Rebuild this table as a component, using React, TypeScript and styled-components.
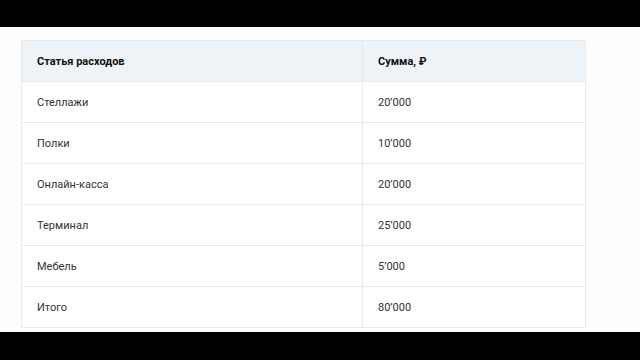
import styled, { createGlobalStyle } from 'styled-components';

interface ExpenseRow {
  item: string;
  amount: string;
}

const GlobalStyle = createGlobalStyle`
  html, body {
    margin: 0;
    padding: 0;
    background: #000;
  }
  body {
    font-family: Roboto, "Liberation Sans", sans-serif;
  }
`;

const Frame = styled.div`
  width: 640px;
  height: 360px;
  display: flex;
  flex-direction: column;
  background: #000;
`;

const Screen = styled.div`
  margin-top: 27px;
  height: 305px;
  background: #fdfdfd;
  padding: 13px 0 0 21px;
  box-sizing: border-box;
`;

const Table = styled.table`
  width: 565px;
  border-collapse: collapse;
  table-layout: fixed;
  font-size: 11px;
  color: #333;
`;

const HeadCell = styled.th`
  height: 41px;
  padding: 0 15px;
  text-align: left;
  font-weight: 700;
  color: #111;
  background: #eef3f7;
  border: 1px solid #e3e9ee;
  box-sizing: border-box;
`;

const Cell = styled.td`
  height: 41px;
  padding: 0 15px;
  text-align: left;
  font-weight: 400;
  background: #fff;
  border: 1px solid #e6ebef;
  box-sizing: border-box;
`;

const expenses: ExpenseRow[] = [
  { item: 'Стеллажи', amount: '20’000' },
  { item: 'Полки', amount: '10’000' },
  { item: 'Онлайн-касса', amount: '20’000' },
  { item: 'Терминал', amount: '25’000' },
  { item: 'Мебель', amount: '5’000' },
  { item: 'Итого', amount: '80’000' },
];

const App = () => {
  return (
    <Frame>
      <GlobalStyle />
      <Screen>
        <Table>
          <colgroup>
            <col style={{ width: '341px' }} />
            <col />
          </colgroup>
          <thead>
            <tr>
              <HeadCell>Статья расходов</HeadCell>
              <HeadCell>Сумма, ₽</HeadCell>
            </tr>
          </thead>
          <tbody>
            {expenses.map((row) => (
              <tr key={row.item}>
                <Cell>{row.item}</Cell>
                <Cell>{row.amount}</Cell>
              </tr>
            ))}
          </tbody>
        </Table>
      </Screen>
    </Frame>
  );
};

export default App;
